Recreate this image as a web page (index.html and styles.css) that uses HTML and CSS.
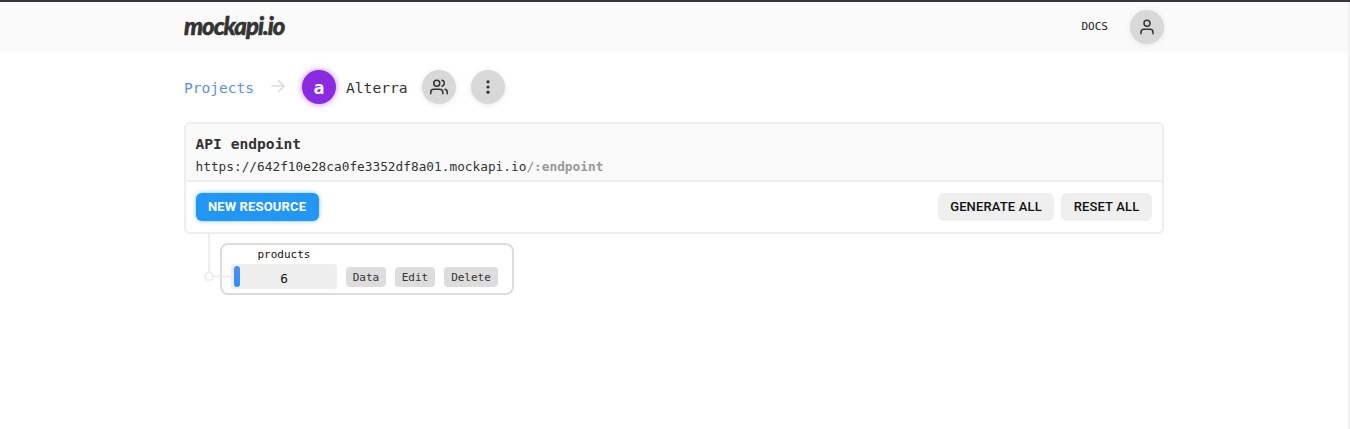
FILE: index.html
```html
<!DOCTYPE html>
<html lang="en">
<head>
<meta charset="utf-8">
<title>mockapi.io</title>
<link rel="stylesheet" href="styles.css">
</head>
<body>
<div class="page">
  <header class="header">
    <div class="container header-inner">
      <a class="logo">mockapi.io</a>
      <nav class="nav">
        <a class="docs">DOCS</a>
        <button class="round header-user" aria-label="Account">
          <svg class="icon" width="18" height="18" viewBox="0 0 24 24"><path d="M20 21v-2a4 4 0 0 0-4-4H8a4 4 0 0 0-4 4v2"/><circle cx="12" cy="7" r="4"/></svg>
        </button>
      </nav>
    </div>
  </header>
  <main class="container">
    <div class="crumbs">
      <a class="projects">Projects</a>
      <svg class="arrow" width="18" height="18" viewBox="0 0 24 24"><path d="M4 12h16M13 5l7 7-7 7"/></svg>
      <span class="round avatar">a</span>
      <span class="name">Alterra</span>
      <button class="round" aria-label="Collaborators">
        <svg class="icon" width="18" height="18" viewBox="0 0 24 24"><path d="M17 21v-2a4 4 0 0 0-4-4H5a4 4 0 0 0-4 4v2"/><circle cx="9" cy="7" r="4"/><path d="M23 21v-2a4 4 0 0 0-3-3.87M16 3.13a4 4 0 0 1 0 7.75"/></svg>
      </button>
      <button class="round" aria-label="More">
        <svg class="dots" width="18" height="18" viewBox="0 0 18 18"><circle cx="9" cy="3.8" r="1.6"/><circle cx="9" cy="9" r="1.6"/><circle cx="9" cy="14.2" r="1.6"/></svg>
      </button>
    </div>
    <section class="card">
      <div class="card-head">
        <h1 class="title">API endpoint</h1>
        <div class="url">https://642f10e28ca0fe3352df8a01.mockapi.io<b class="endpoint">/:endpoint</b></div>
      </div>
      <div class="actions">
        <button class="btn primary">NEW RESOURCE</button>
        <button class="btn generate">GENERATE ALL</button>
        <button class="btn reset">RESET ALL</button>
      </div>
    </section>
    <div class="tree">
      <svg class="branch" width="36" height="61" viewBox="0 0 36 61"><path d="M25 0v38M30 42.5h17"/><circle cx="25" cy="42.5" r="4"/></svg>
      <div class="resource">
        <div class="data">
          <span class="res-name">products</span>
          <div class="meter"><span class="fill"></span><span class="count">6</span></div>
        </div>
        <button class="small w-40">Data</button>
        <button class="small w-40">Edit</button>
        <button class="small w-54">Delete</button>
      </div>
    </div>
  </main>
</div>
</body>
</html>
```
FILE: styles.css
```css
* { box-sizing: border-box; }
body { margin: 0; background: #fff; color: #333; font-family: "DejaVu Sans Mono", monospace; overflow: hidden; }
button { border: 0; padding: 0; margin: 0; font-family: inherit; color: inherit; }
.page { height: 429px; border-top: 2px solid #36373b; background: linear-gradient(#f0f0f0, #f0f0f0) right / 2px 100% no-repeat; }
.container { width: 980px; margin-left: 184px; }
.header { height: 50px; background: #fafafa; margin-right: 2px; }
.header-inner { display: flex; justify-content: space-between; align-items: center; height: 50px; }
.logo { font: italic 900 24px/30px Lato, sans-serif; letter-spacing: -1px; padding-bottom: 3px; color: #333; -webkit-text-stroke: .5px #333; }
.nav { display: flex; align-items: center; gap: 22px; }
.docs { font-size: 11px; line-height: 16px; color: #222; }
.round { width: 34px; height: 34px; flex: none; border-radius: 50%; background: #d8d8d8; display: flex; align-items: center; justify-content: center; box-shadow: 0 1px 5px rgba(0,0,0,.1); }
.icon { fill: none; stroke: #333; stroke-width: 2; stroke-linecap: round; stroke-linejoin: round; }
.dots { fill: #333; }
.crumbs { display: flex; align-items: center; height: 70px; font-size: 14.62px; }
.projects { width: 70px; color: #5c90ec; letter-spacing: -.05px; }
.arrow { margin: 0 15px 2px; fill: none; stroke: #ddd; stroke-width: 2.3; stroke-linecap: round; stroke-linejoin: round; }
.avatar { background: #8a2be2; color: #fff; font: bold 18px "DejaVu Sans Mono", monospace; padding-top: 1px; box-shadow: 0 0 6px rgba(138,43,226,.6); }
.name { width: 61px; margin: 0 15px 0 10px; }
.crumbs .round + .round { margin-left: 15px; }
.card { height: 112px; border: 2px solid #eee; border-radius: 6px; overflow: hidden; }
.card-head { height: 58px; padding: 9px 10px 0 9.5px; background: #fafafa; border-bottom: 2px solid #eee; }
.title { margin: 0; font-size: 14.62px; line-height: 22px; }
.url { font-size: 12.79px; line-height: 23px; }
.endpoint { color: #999; }
.actions { display: flex; padding: 11px 10px; gap: 7px; }
.btn { height: 28px; padding-bottom: 2px; border-radius: 6px; background: #efefef; color: #111; font: 500 13px Roboto, sans-serif; letter-spacing: .15px; }
.primary { width: 123px; padding-right: 1px; margin-right: auto; background: #2196f3; color: #fff; font-weight: 700; box-shadow: 0 0 4px rgba(33,150,243,.6); }
.generate { width: 116px; }
.reset { width: 91px; }
.tree { display: flex; }
.branch { overflow: visible; position: relative; z-index: 1; fill: none; stroke: #eee; stroke-width: 2; }
.resource { display: flex; width: 294px; height: 52px; margin-top: 9px; padding: 0 9px; border: 2px solid #ddd; border-radius: 8px; }
.data { width: 106px; margin-right: 9px; font-size: 11px; color: #111; text-align: center; }
.res-name { display: block; height: 19px; line-height: 20px; }
.meter { display: flex; align-items: center; height: 25px; padding-left: 3px; border-radius: 4px; background: #eee; }
.fill { width: 6px; height: 21px; border-radius: 3px; background: linear-gradient(#5090f0, #2f8cff); }
.count { flex: 1; font-size: 12.8px; padding: 3px 9px 0 0; }
.small { height: 20px; margin: 22px 9px 0 0; border-radius: 4px; background: #ddd; font-size: 11px; }
.w-40 { width: 40px; }
.w-54 { width: 54px; margin-right: 0; }
```
